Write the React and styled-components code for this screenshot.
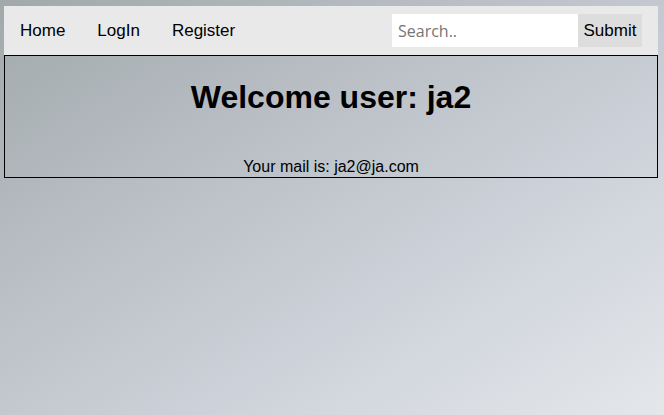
import React, { useState } from "react";
import styled, { createGlobalStyle } from "styled-components";

const GlobalStyle = createGlobalStyle`
  html, body {
    margin: 0;
    padding: 0;
  }
  body {
    min-height: 415px;
    padding: 6px 6px 0 4px;
    box-sizing: border-box;
    font-family: "Liberation Sans", Arial, sans-serif;
    background: linear-gradient(to bottom right, #a1a9ab 0%, #b9bfc5 35%, #cdd2da 65%, #e4e7ea 100%);
  }
`;

const TopNav = styled.nav`
  display: flex;
  align-items: center;
  height: 49px;
  background-color: #e9e9e9;
`;

const NavLink = styled.a`
  padding: 14px 16px;
  font-size: 17px;
  color: black;
  text-decoration: none;
  cursor: pointer;
`;

const SearchForm = styled.form`
  display: flex;
  margin-left: auto;
  margin-right: 16px;
  align-self: flex-start;
  margin-top: 8px;
`;

const SearchInput = styled.input`
  width: 186px;
  height: 33px;
  padding: 0 6px;
  border: none;
  outline: none;
  background: white;
  font-family: "Open Sans", "DejaVu Sans", sans-serif;
  font-size: 16px;
  color: black;
  box-sizing: border-box;
  ::placeholder {
    color: #757575;
  }
`;

const SubmitButton = styled.button`
  height: 33px;
  width: 64px;
  padding: 0;
  border: none;
  background: #dddddd;
  font-family: "Liberation Sans", Arial, sans-serif;
  font-size: 17px;
  color: black;
  cursor: pointer;
`;

const WelcomeBox = styled.section`
  border: 1px solid black;
  height: 123px;
  box-sizing: border-box;
  text-align: center;
  display: flex;
  flex-direction: column;
  align-items: center;
`;

const Title = styled.h1`
  margin: 23px 0 0;
  font-size: 32px;
  font-weight: bold;
  line-height: 37px;
`;

const Mail = styled.p`
  margin: auto 0 1px;
  font-size: 16px;
  line-height: 18px;
`;

export default function App() {
  const [query, setQuery] = useState("");

  return (
    <>
      <GlobalStyle />
      <TopNav>
        <NavLink>Home</NavLink>
        <NavLink>LogIn</NavLink>
        <NavLink>Register</NavLink>
        <SearchForm onSubmit={(e) => e.preventDefault()}>
          <SearchInput
            type="text"
            placeholder="Search.."
            value={query}
            onChange={(e) => setQuery(e.target.value)}
          />
          <SubmitButton type="submit">Submit</SubmitButton>
        </SearchForm>
      </TopNav>
      <WelcomeBox>
        <Title>Welcome user: ja2</Title>
        <Mail>Your mail is: ja2@ja.com</Mail>
      </WelcomeBox>
    </>
  );
}
